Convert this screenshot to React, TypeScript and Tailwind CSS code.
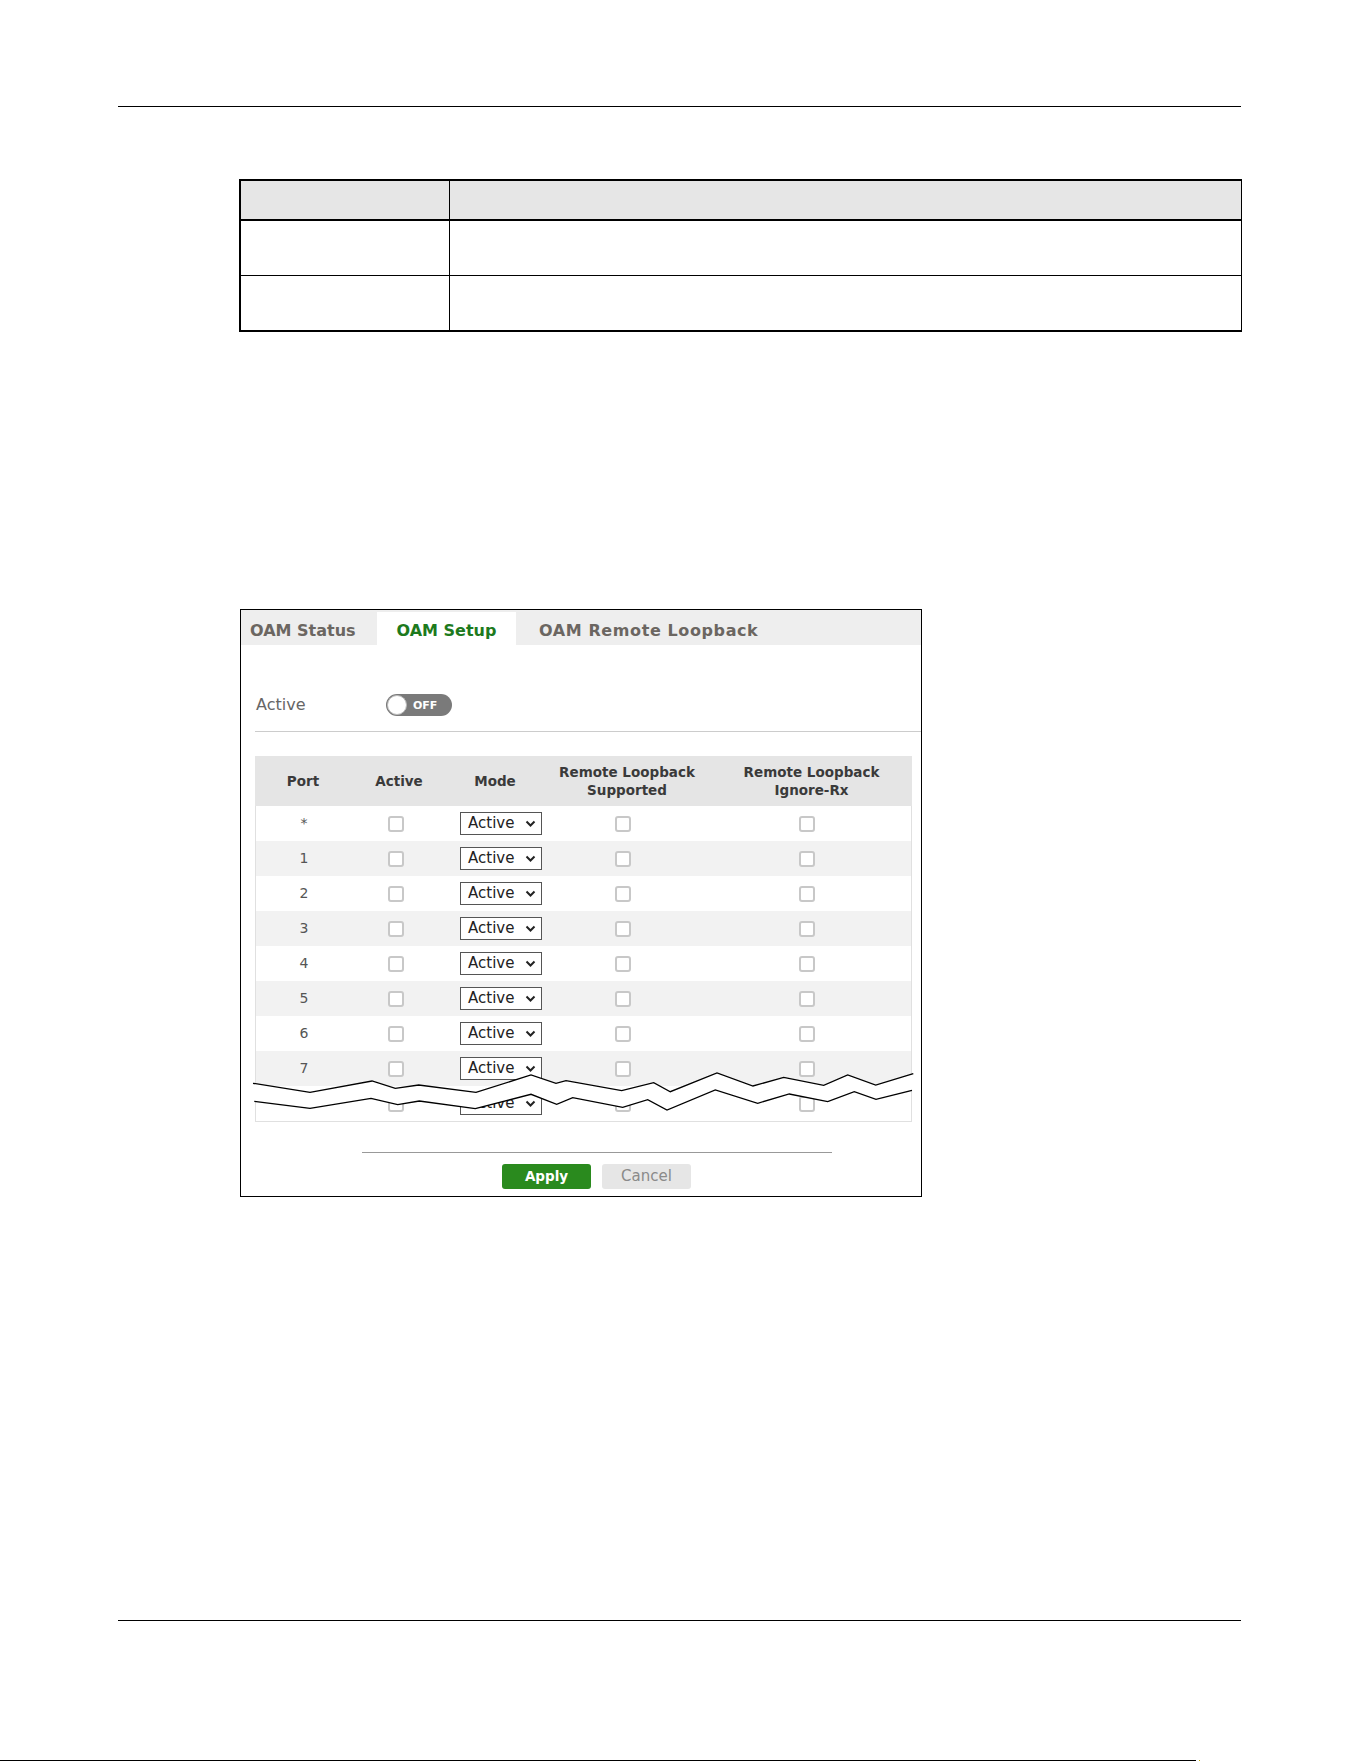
import React from 'react';

const ports = ['*', '1', '2', '3', '4', '5', '6', '7', '8'];

// break mark drawn across the bottom of the port table
const upper = [
  [1, 14.3], [58, 23.3], [120, 12], [143.3, 19.3], [166.7, 16], [224, 23.3], [279, 6], [304, 14.3],
  [314, 11.7], [369.7, 21.7], [401.7, 13.7], [418.3, 22.7], [465, 4], [501, 17], [531.7, 8.3],
  [571.7, 16.3], [595.7, 6], [623.7, 16], [661.3, 4.7],
];
const lower = [
  [2.3, 32.3], [58, 39.3], [119, 29.3], [145.7, 35.7], [167.3, 32], [223.3, 39.7], [279, 25.3],
  [304.7, 35.3], [320.7, 28.7], [370.7, 38.3], [395.7, 30.7], [415, 41], [463.3, 21], [505.7, 34.3],
  [537.3, 25], [575.7, 32.7], [602.3, 22.7], [624, 30.3], [660, 21.3],
];
const pts = (p: number[][]) => p.map(([x, y]) => `${x},${y}`).join(' ');

function Checkbox() {
  return <div className="w-4 h-4 rounded-[3px] border-2 border-[#c8c8c8] bg-white" />;
}

function ModeSelect() {
  return (
    <div className="w-[82px] h-[23px] border border-[#555] bg-white flex items-center justify-between pl-[7px] pr-[5px]">
      <span className="text-[15px] text-[#222] leading-none">Active</span>
      <svg width="11" height="7" viewBox="0 0 11 7">
        <path d="M1.5 1.5l4 4 4-4" fill="none" stroke="#222" strokeWidth="2" />
      </svg>
    </div>
  );
}

function PortRow({ port, index }: { port: string; index: number }) {
  return (
    <div
      className={
        index % 2 === 1
          ? 'grid grid-cols-[96px_96px_96px_168px_201px] h-[35px] items-center bg-[#f2f2f2]'
          : 'grid grid-cols-[96px_96px_96px_168px_201px] h-[35px] items-center bg-white'
      }
    >
      <div className="text-center text-[14px] text-[#555]">{port}</div>
      <div className="flex justify-center pr-[8px]">
        <Checkbox />
      </div>
      <div className="flex justify-center pl-[10px]">
        <ModeSelect />
      </div>
      <div className="flex justify-center pr-[10px]">
        <Checkbox />
      </div>
      <div className="flex justify-center pr-[11px]">
        <Checkbox />
      </div>
    </div>
  );
}

function OamSetup() {
  return (
    <div className="ml-[240px] mt-[277px] w-[682px] h-[588px] border border-black flex flex-col font-['DejaVu_Sans',sans-serif]">
      {/* tabs */}
      <div className="h-[35px] bg-[#eeeeee] flex items-end text-[16px] font-bold">
        <div className="w-[136px] h-[35px] pl-[9px] pt-[6px] flex items-center text-[#6b6661]">OAM Status</div>
        <div className="w-[139px] h-[33px] pt-[4px] bg-white flex items-center justify-center text-[#1d7a1d]">OAM Setup</div>
        <div className="h-[35px] pl-[23px] pt-[6px] flex items-center text-[#6b6661] tracking-[0.6px]">OAM Remote Loopback</div>
      </div>

      {/* global switch */}
      <div className="mt-[49px] h-[22px] pl-[15px] flex items-center">
        <div className="w-[130px] text-[16px] text-[#666]">Active</div>
        <div className="w-[66px] h-[22px] rounded-full bg-[#7a7a7a] flex items-center pl-px">
          <div className="w-5 h-5 rounded-full bg-white border border-[#bbb]" />
          <span className="ml-[6px] text-[11px] font-semibold text-white leading-none">OFF</span>
        </div>
      </div>
      <div className="mt-[15px] ml-[14px] h-px bg-[#cccccc]" />

      {/* port table */}
      <div className="mt-[24px] ml-[14px] w-[657px]">
        <div className="grid grid-cols-[96px_96px_96px_168px_201px] h-[50px] items-center bg-[#e5e5e5] text-[13.5px] font-bold text-[#3a3a3a] leading-[18px] text-center">
          <div>Port</div>
          <div>Active</div>
          <div>Mode</div>
          <div>
            Remote Loopback
            <br />
            Supported
          </div>
          <div>
            Remote Loopback
            <br />
            Ignore-Rx
          </div>
        </div>
        <div className="relative border-x border-b border-[#e0e0e0]">
          {ports.map((p, i) => (
            <PortRow key={p} port={p} index={i} />
          ))}
          <svg className="absolute left-[-4px] top-[263px]" width="664" height="45" viewBox="0 0 664 45">
            <polygon points={pts([...upper, ...lower.slice().reverse()])} fill="#fff" />
            <polyline points={pts(upper)} fill="none" stroke="#000" strokeWidth="1.3" />
            <polyline points={pts(lower)} fill="none" stroke="#000" strokeWidth="1.3" />
          </svg>
        </div>
      </div>

      <div className="mt-[30px] ml-[121px] w-[470px] h-px bg-[#999]" />
      <div className="mt-[11px] pl-[261px] flex gap-[11px]">
        <button className="w-[89px] h-[25px] rounded-[3px] bg-[#2a8a1e] text-white text-[13.5px] font-bold">Apply</button>
        <button className="w-[89px] h-[25px] rounded-[3px] bg-[#e6e6e6] text-[#8a8a8a] text-[15px]">Cancel</button>
      </div>
    </div>
  );
}

export default function App() {
  return (
    <div className="w-[1361px] h-[1761px] bg-white overflow-hidden font-['Liberation_Sans',sans-serif]">
      <div className="mt-[106px] ml-[118px] w-[1123px] h-px bg-black" />

      {/* field description table */}
      <div className="mt-[72px] ml-[239px] w-[1003px] border-t-2 border-l-2 border-r border-b-2 border-black">
        <div className="grid grid-cols-[208px_1fr] h-[40px] bg-[#e6e6e6] border-b-2 border-black">
          <div />
          <div className="border-l border-black" />
        </div>
        <div className="grid grid-cols-[208px_1fr] h-[55px] border-b border-black">
          <div />
          <div className="border-l border-black" />
        </div>
        <div className="grid grid-cols-[208px_1fr] h-[54px]">
          <div />
          <div className="border-l border-black" />
        </div>
      </div>

      <OamSetup />

      <div className="mt-[423px] ml-[118px] w-[1123px] h-px bg-black" />
      <div className="mt-[139px] flex items-center">
        <div className="w-[1196px] h-px bg-black" />
        <div className="ml-[3px] w-px h-px bg-[#c8b400]" />
      </div>
    </div>
  );
}
